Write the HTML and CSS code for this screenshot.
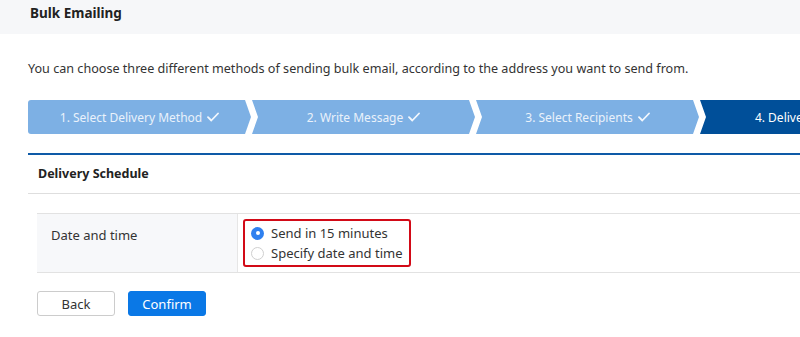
FILE: index.html
```html
<!DOCTYPE html>
<html>
<head>
<meta charset="utf-8">
<link rel="stylesheet" href="styles.css">
</head>
<body>
<div class="header">Bulk Emailing</div>
<div class="main">
  <p class="desc">You can choose three different methods of sending bulk email, according to the address you want to send from.</p>
  <div class="steps">
    <div class="step step-first done">1. Select Delivery Method <svg class="check" viewBox="0 0 12 10" width="12" height="10"><polyline points="1,5.2 4.3,8.5 11,1.5"/></svg></div>
    <div class="step done">2. Write Message <svg class="check" viewBox="0 0 12 10" width="12" height="10"><polyline points="1,5.2 4.3,8.5 11,1.5"/></svg></div>
    <div class="step done">3. Select Recipients <svg class="check" viewBox="0 0 12 10" width="12" height="10"><polyline points="1,5.2 4.3,8.5 11,1.5"/></svg></div>
    <div class="step current">4. Delivery Schedule</div>
  </div>
  <div class="section">
    <div class="section-title">Delivery Schedule</div>
    <div class="table">
      <div class="label">Date and time</div>
      <div class="value">
        <div class="highlight">
          <label class="radio-row"><span class="radio checked"></span>Send in 15 minutes</label>
          <label class="radio-row"><span class="radio"></span>Specify date and time</label>
        </div>
      </div>
    </div>
    <div class="buttons">
      <button class="btn btn-back">Back</button>
      <button class="btn btn-confirm">Confirm</button>
    </div>
  </div>
</div>
</body>
</html>
```

FILE: styles.css
```css
html, body {
  margin: 0;
  padding: 0;
  background: #fff;
  font-family: "Noto Sans", "DejaVu Sans", sans-serif;
  color: #333;
  overflow: hidden;
}
.header {
  height: 34px;
  line-height: 26px;
  padding: 0 30px;
  background: #f6f7f9;
  font-size: 13.5px;
  font-weight: bold;
  color: #222;
}
.main {
  padding-left: 28px;
}
.desc {
  margin: 25px 0 0 0;
  font-size: 12.6px;
  line-height: 20px;
  white-space: nowrap;
}
.steps {
  display: flex;
  gap: 1px;
  margin-top: 21px;
  height: 34px;
  width: 900px;
}
.step {
  flex: 0 0 223px;
  display: flex;
  align-items: center;
  justify-content: center;
  height: 34px;
  font-size: 12px;
  color: #eaf2fb;
  background: #7db0e4;
  clip-path: polygon(0 0, calc(100% - 6px) 0, 100% 50%, calc(100% - 6px) 100%, 0 100%, 6px 50%);
  white-space: nowrap;
}
.step-first {
  clip-path: polygon(0 0, calc(100% - 6px) 0, 100% 50%, calc(100% - 6px) 100%, 0 100%);
  border-radius: 3px 0 0 3px;
}
.step.current {
  background: #004f99;
  color: #fff;
  padding-right: 18px;
}
.check {
  margin-left: 5px;
  fill: none;
  stroke: #f2f7fd;
  stroke-width: 1.8;
  stroke-linecap: round;
  stroke-linejoin: round;
}
.section {
  margin-top: 19px;
  border-top: 2px solid #0e5aa7;
}
.section-title {
  height: 38px;
  line-height: 38px;
  padding-left: 10px;
  font-size: 12.5px;
  font-weight: bold;
  color: #222;
  border-bottom: 1px solid #dedede;
}
.table {
  display: flex;
  margin: 19px 0 0 9px;
  border-top: 1px solid #e2e2e2;
  border-bottom: 1px solid #e2e2e2;
}
.label {
  flex: 0 0 201px;
  box-sizing: border-box;
  background: #f7f8fa;
  border-right: 1px solid #e6e6e6;
  padding: 12px 14px;
  font-size: 13px;
  line-height: 18px;
}
.value {
  flex: 1;
  padding: 5px 4px 5px 5px;
}
.highlight {
  box-sizing: border-box;
  width: 168px;
  height: 48px;
  border: 2px solid #d20a17;
  border-radius: 3px;
  padding-left: 6px;
  display: flex;
  flex-direction: column;
  justify-content: center;
}
.radio-row {
  display: flex;
  align-items: center;
  height: 20px;
  font-size: 13px;
  color: #333;
  white-space: nowrap;
}
.radio {
  box-sizing: border-box;
  width: 13px;
  height: 13px;
  border-radius: 50%;
  border: 1px solid #cfcfcf;
  background: #fff;
  margin-right: 7px;
  position: relative;
}
.radio.checked {
  border: none;
  background: #2f80ef;
}
.radio.checked::after {
  content: "";
  position: absolute;
  left: 4.5px;
  top: 4.5px;
  width: 4px;
  height: 4px;
  border-radius: 50%;
  background: #fff;
}
.buttons {
  display: flex;
  gap: 13px;
  margin: 18px 0 0 9px;
}
.btn {
  width: 78px;
  height: 25px;
  border-radius: 3px;
  font-family: inherit;
  font-size: 13px;
  padding: 0;
  cursor: pointer;
}
.btn-back {
  background: #fff;
  border: 1px solid #cccccc;
  color: #333;
}
.btn-confirm {
  background: #0a78e6;
  border: 1px solid #0a78e6;
  color: #fff;
}
```
